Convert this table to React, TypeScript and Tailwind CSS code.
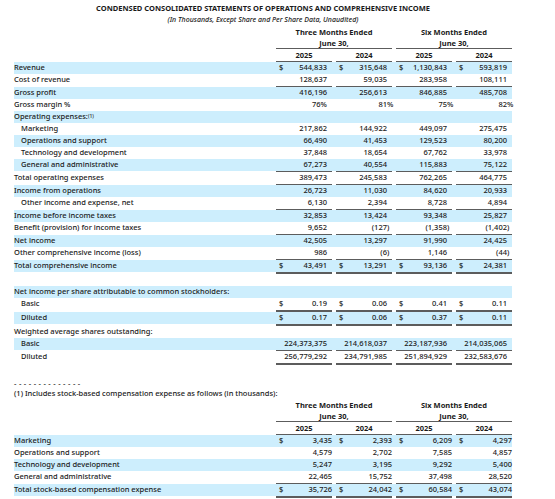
import React from "react";

type Row = {
  label?: React.ReactNode;
  vals?: string[];
  hl?: boolean;
  indent?: boolean;
  dollar?: boolean;
  rule?: "single" | "double";
};

// top statement rows
const ops: Row[] = [
  { label: "Revenue", vals: ["544,833", "315,648", "1,130,843", "593,819"], hl: true, dollar: true },
  { label: "Cost of revenue", vals: ["128,637", "59,035", "283,958", "108,111"], rule: "single" },
  { label: "Gross profit", vals: ["416,196", "256,613", "846,885", "485,708"], hl: true },
  { label: "Gross margin %", vals: ["76%", "81%", "75%", "82%"] },
  {
    label: (
      <>
        Operating expenses:<sup className="text-[5px] relative -top-[1px]">(1)</sup>
      </>
    ),
    hl: true,
  },
  { label: "Marketing", vals: ["217,862", "144,922", "449,097", "275,475"], indent: true },
  { label: "Operations and support", vals: ["66,490", "41,453", "129,523", "80,200"], indent: true, hl: true },
  { label: "Technology and development", vals: ["37,848", "18,654", "67,762", "33,978"], indent: true },
  { label: "General and administrative", vals: ["67,273", "40,554", "115,883", "75,122"], indent: true, hl: true, rule: "single" },
  { label: "Total operating expenses", vals: ["389,473", "245,583", "762,265", "464,775"], rule: "single" },
  { label: "Income from operations", vals: ["26,723", "11,030", "84,620", "20,933"], hl: true },
  { label: "Other income and expense, net", vals: ["6,130", "2,394", "8,728", "4,894"], indent: true, rule: "single" },
  { label: "Income before income taxes", vals: ["32,853", "13,424", "93,348", "25,827"], hl: true },
  { label: "Benefit (provision) for income taxes", vals: ["9,652", "(127)", "(1,358)", "(1,402)"], rule: "single" },
  { label: "Net income", vals: ["42,505", "13,297", "91,990", "24,425"], hl: true },
  { label: "Other comprehensive income (loss)", vals: ["986", "(6)", "1,146", "(44)"], rule: "single" },
  { label: "Total comprehensive income", vals: ["43,491", "13,291", "93,136", "24,381"], hl: true, dollar: true, rule: "double" },
  {},
  { label: "Net income per share attributable to common stockholders:", hl: true },
  { label: "Basic", vals: ["0.19", "0.06", "0.41", "0.11"], indent: true, dollar: true, rule: "double" },
  { label: "Diluted", vals: ["0.17", "0.06", "0.37", "0.11"], indent: true, dollar: true, hl: true, rule: "double" },
  { label: "Weighted average shares outstanding:" },
  { label: "Basic", vals: ["224,373,375", "214,618,037", "223,187,936", "214,035,065"], indent: true, hl: true, rule: "single" },
  { label: "Diluted", vals: ["256,779,292", "234,791,985", "251,894,929", "232,583,676"], indent: true, rule: "double" },
];

const sbc: Row[] = [
  { label: "Marketing", vals: ["3,435", "2,393", "6,209", "4,297"], hl: true, dollar: true },
  { label: "Operations and support", vals: ["4,579", "2,702", "7,585", "4,857"] },
  { label: "Technology and development", vals: ["5,247", "3,195", "9,292", "5,400"], hl: true },
  { label: "General and administrative", vals: ["22,465", "15,752", "37,498", "28,520"], rule: "single" },
  { label: "Total stock-based compensation expense", vals: ["35,726", "24,042", "60,584", "43,074"], hl: true, dollar: true, rule: "double" },
];

function Cell({ v, dollar, hang, tight }: { v?: string; dollar?: boolean; hang: boolean; tight?: boolean }) {
  let core = v ?? "";
  let tail = "";
  if (hang && (core.endsWith(")") || core.endsWith("%"))) {
    tail = core.slice(-1);
    core = core.slice(0, -1);
  }
  return (
    <div className={`w-[56px] flex items-center justify-between pl-[3px] whitespace-nowrap ${tight ? "pr-0" : "pr-[5px]"}`}>
      <span>{dollar ? "$" : ""}</span>
      <span>
        {core}
        {tail && <span className="inline-block w-0">{tail}</span>}
      </span>
    </div>
  );
}

function Rule({ kind }: { kind: "single" | "double" }) {
  return (
    <div className={`flex ${kind === "double" ? "h-[2px]" : "h-[1px]"}`}>
      <div className="w-[262px]" />
      <div className="flex gap-[4px]">
        {[0, 1, 2, 3].map((i) => (
          <div key={i} className="w-[56px] h-full bg-[#5c5c5c]" />
        ))}
      </div>
    </div>
  );
}

function Rows({ rows, tight }: { rows: Row[]; tight?: boolean }) {
  return (
    <>
      {rows.map((r, i) => (
        <React.Fragment key={i}>
          <div className={`flex items-center h-[12px] w-[498px] ${r.hl ? "bg-[#cdeefd]" : ""}`}>
            <div className={`w-[262px] whitespace-nowrap ${r.indent ? "pl-[7px]" : ""}`}>{r.label}</div>
            {r.vals && (
              <div className="flex gap-[4px]">
                {r.vals.map((v, j) => (
                  <Cell key={j} v={v} dollar={r.dollar} hang={j > 0} tight={tight} />
                ))}
              </div>
            )}
          </div>
          {r.rule && <Rule kind={r.rule} />}
        </React.Fragment>
      ))}
    </>
  );
}

function ColHeader() {
  return (
    <div className="flex font-bold">
      <div className="w-[262px]" />
      <div className="flex gap-[4px]">
        {["Three Months Ended", "Six Months Ended"].map((t) => (
          <div key={t} className="w-[116px] flex flex-col items-center">
            <div className="h-[12px] leading-[12px]">{t}</div>
            <div className="h-[11px] leading-[11px] w-full text-center border-b border-[#5c5c5c]">June 30,</div>
            <div className="flex gap-[4px] w-full">
              {["2025", "2024"].map((y) => (
                <div key={y} className="w-[56px] h-[13px] leading-[12px] text-center border-b border-[#5c5c5c]">
                  {y}
                </div>
              ))}
            </div>
          </div>
        ))}
      </div>
    </div>
  );
}

export default function App() {
  return (
    <div className="w-[555px] h-[499px] overflow-hidden bg-white pl-[14px] pt-[2px] font-['Noto_Sans',sans-serif] font-medium text-[7.5px] text-[#1a1a1a]">
      <div className="w-[498px] h-[12px] leading-[12px] text-center font-bold text-[7.5px]">
        CONDENSED CONSOLIDATED STATEMENTS OF OPERATIONS AND COMPREHENSIVE INCOME
      </div>
      <div className="w-[498px] h-[12px] leading-[12px] text-center italic text-[7px]">
        (In Thousands, Except Share and Per Share Data, Unaudited)
      </div>
      <ColHeader />
      <Rows rows={ops} />

      <div className="h-[14px]" />
      <div className="h-[8px] leading-[8px] tracking-[2.5px]">--------------</div>
      <div className="h-[12px] leading-[12px]">
        (1) Includes stock-based compensation expense as follows (in thousands):
      </div>
      <ColHeader />
      <Rows rows={sbc} tight />
    </div>
  );
}
